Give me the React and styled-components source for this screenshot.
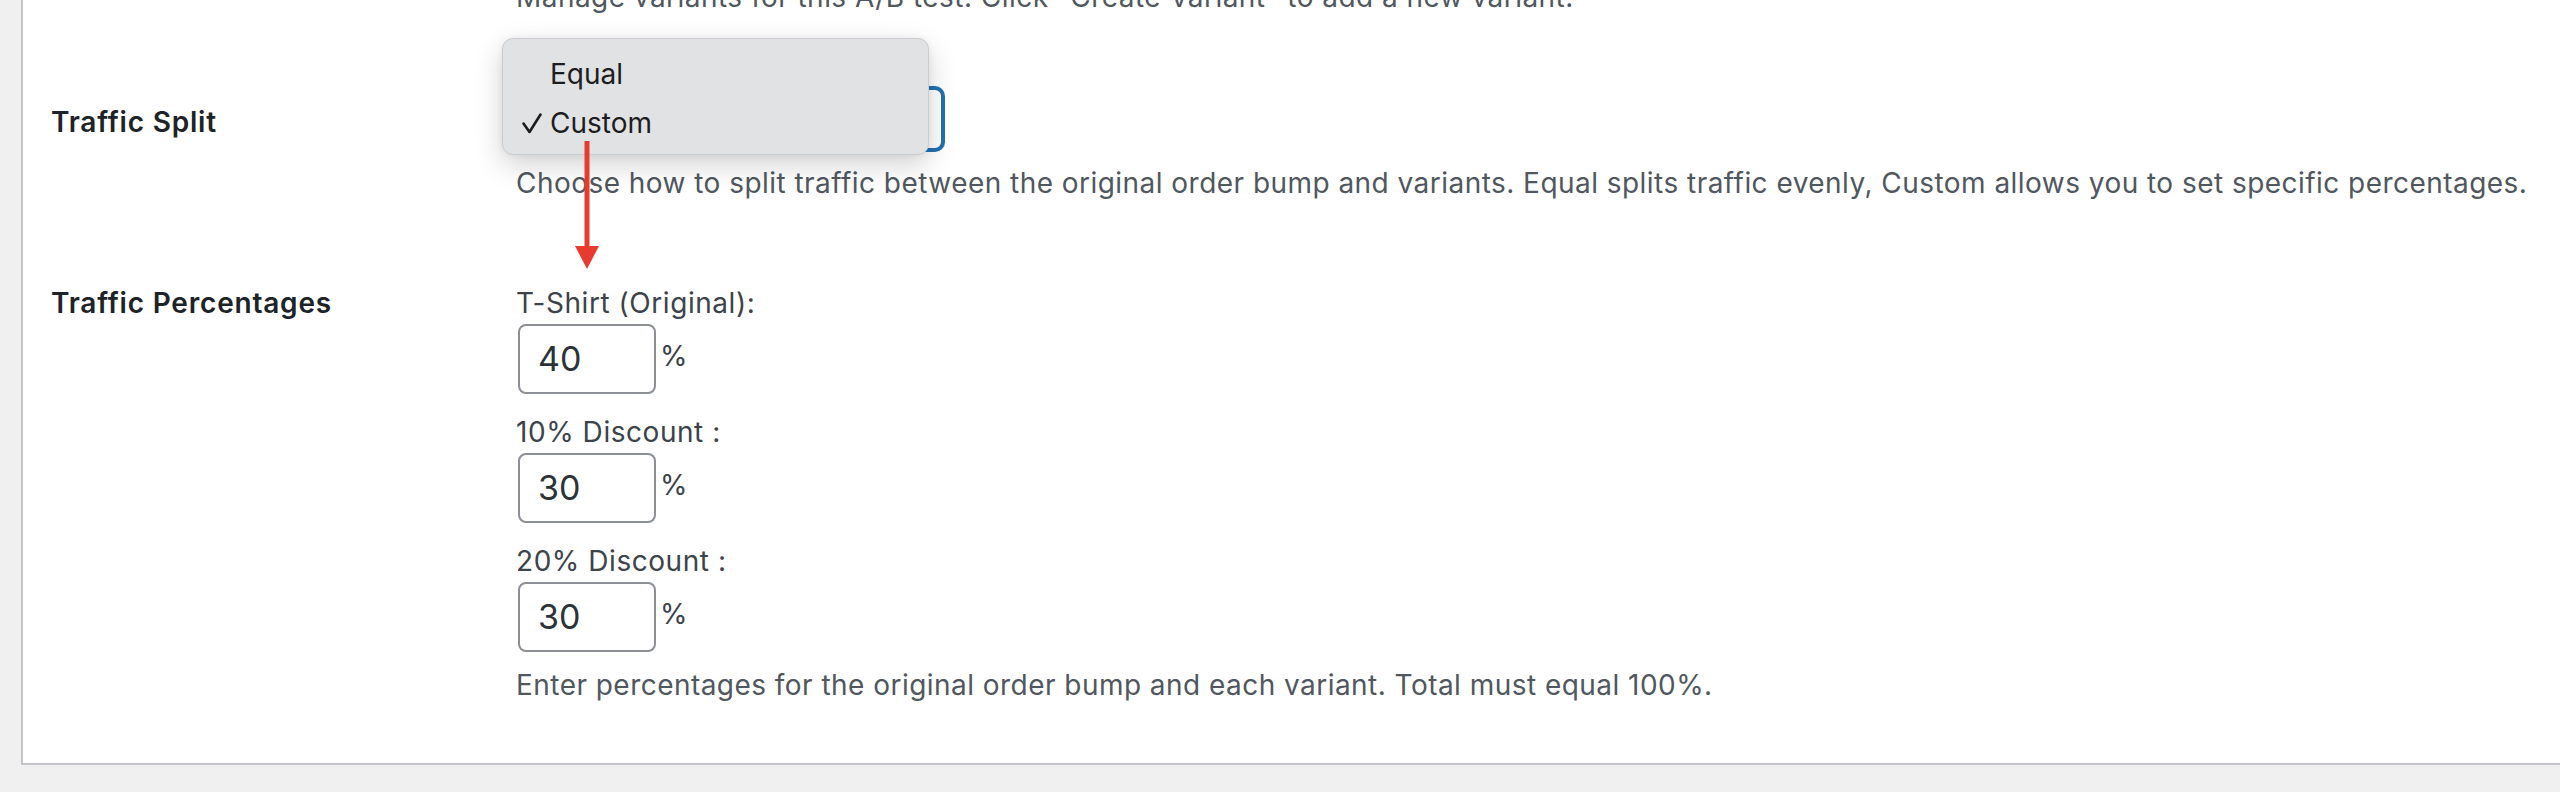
import React from "react";
import styled, { createGlobalStyle } from "styled-components";

const GlobalStyle = createGlobalStyle`
  html, body {
    margin: 0;
    padding: 0;
    background: #f0f0f1;
    overflow: hidden;
  }
  body {
    font-family: Inter, "Noto Sans", "Liberation Sans", sans-serif;
    -webkit-font-smoothing: antialiased;
  }
`;

const Screen = styled.div`
  width: 2560px;
  height: 792px;
  overflow: hidden;
  background: #f0f0f1;
`;

const Card = styled.div`
  margin: -58px 0 0 21px;
  background: #ffffff;
  border-left: 2px solid #c3c4c7;
  border-bottom: 2px solid #c3c4c7;
  padding: 0 0 23px 28px;
`;

const Row = styled.div`
  display: grid;
  grid-template-columns: 465px 1fr;
  padding: ${(p) => (p.$spaced ? 44 : 34)}px 0 34px;
`;

const RowLabel = styled.div`
  font-size: 28px;
  line-height: 42px;
  font-weight: 600;
  letter-spacing: 0.8px;
  color: #1d2327;
  padding-top: ${(p) => p.$offset || 0}px;
`;

const Field = styled.div`
  display: flex;
  flex-direction: column;
  align-items: flex-start;
`;

const Description = styled.p`
  margin: ${(p) => p.$top || 0}px 0 0;
  font-size: 28px;
  line-height: 42px;
  letter-spacing: 0.46px;
  color: #50575e;
  white-space: nowrap;
`;

const SelectWrap = styled.div`
  position: relative;
  margin: 2px;
`;

const SelectBox = styled.div`
  box-sizing: border-box;
  width: 425px;
  height: 62px;
  border: 2px solid #2271b1;
  box-shadow: 0 0 0 2px #2271b1;
  border-radius: 8px;
  padding: 0 16px;
  font-size: 28px;
  line-height: 58px;
  color: #2c3338;
  background: #fff;
`;

const Menu = styled.div`
  position: absolute;
  left: -16px;
  top: -50px;
  box-sizing: border-box;
  width: 427px;
  height: 117px;
  padding: 10px 0 9px;
  background: #e1e2e4;
  border: 1px solid #cbcccf;
  border-radius: 11px;
  box-shadow: 0 10px 28px rgba(0, 0, 0, 0.18), 0 0 6px rgba(0, 0, 0, 0.06);
`;

const MenuItem = styled.div`
  display: flex;
  align-items: center;
  height: 49px;
  padding-left: 19px;
  font-size: 28px;
  color: #1d1d1f;
`;

const Check = styled.span`
  display: inline-flex;
  width: 28px;
  height: 20px;
  align-items: center;
`;

const Arrow = styled.svg`
  position: absolute;
  left: 57px;
  top: 53px;
  overflow: visible;
`;

const Entry = styled.div`
  margin-bottom: ${(p) => (p.$last ? 0 : 17)}px;
`;

const EntryLabel = styled.div`
  font-size: 28px;
  line-height: 42px;
  letter-spacing: 0.55px;
  color: #3c434a;
`;

const InputLine = styled.div`
  display: flex;
  align-items: baseline;
  gap: 4px;
`;

const NumberInput = styled.div`
  box-sizing: border-box;
  width: 138px;
  height: 70px;
  margin-left: 2px;
  border: 2px solid #8c8f94;
  border-radius: 8px;
  padding-left: 18px;
  font-size: 34px;
  line-height: 66px;
  color: #2c3338;
  background: #fff;
`;

const Unit = styled.span`
  font-size: 28px;
  color: #3c434a;
  position: relative;
  top: -5px;
`;

const CheckIcon = () => (
  <svg width="20" height="22" viewBox="0 0 20 22">
    <path
      d="M1.5 11.5 L7.5 20 L18.5 2.5"
      fill="none"
      stroke="#1d1d1f"
      strokeWidth="2.6"
      strokeLinecap="round"
      strokeLinejoin="round"
    />
  </svg>
);

const variants = [
  { name: "T-Shirt (Original):", value: 40 },
  { name: "10% Discount :", value: 30 },
  { name: "20% Discount :", value: 30 },
];

export default function App() {
  return (
    <Screen>
      <GlobalStyle />
      <Card>
        <Row>
          <RowLabel />
          <Field>
            <Description>
              Manage variants for this A/B test. Click "Create Variant" to add a new variant.
            </Description>
          </Field>
        </Row>

        <Row>
          <RowLabel $offset={15}>Traffic Split</RowLabel>
          <Field>
            <SelectWrap>
              <SelectBox>Custom</SelectBox>
              <Menu>
                <MenuItem>
                  <Check />
                  Equal
                </MenuItem>
                <MenuItem>
                  <Check>
                    <CheckIcon />
                  </Check>
                  Custom
                </MenuItem>
              </Menu>
              <Arrow width="24" height="128" viewBox="0 0 24 128">
                <line x1="12" y1="0" x2="12" y2="108" stroke="#e63b2e" strokeWidth="5" />
                <polygon points="0,105 24,105 12,128" fill="#e63b2e" />
              </Arrow>
            </SelectWrap>
            <Description $top={10}>
              Choose how to split traffic between the original order bump and variants. Equal
              splits traffic evenly, Custom allows you to set specific percentages.
            </Description>
          </Field>
        </Row>

        <Row $spaced>
          <RowLabel>Traffic Percentages</RowLabel>
          <Field>
            {variants.map((v, i) => (
              <Entry key={v.name} $last={i === variants.length - 1}>
                <EntryLabel>{v.name}</EntryLabel>
                <InputLine>
                  <NumberInput>{v.value}</NumberInput>
                  <Unit>%</Unit>
                </InputLine>
              </Entry>
            ))}
            <Description $top={12}>
              Enter percentages for the original order bump and each variant. Total must equal
              100%.
            </Description>
          </Field>
        </Row>
      </Card>
    </Screen>
  );
}
